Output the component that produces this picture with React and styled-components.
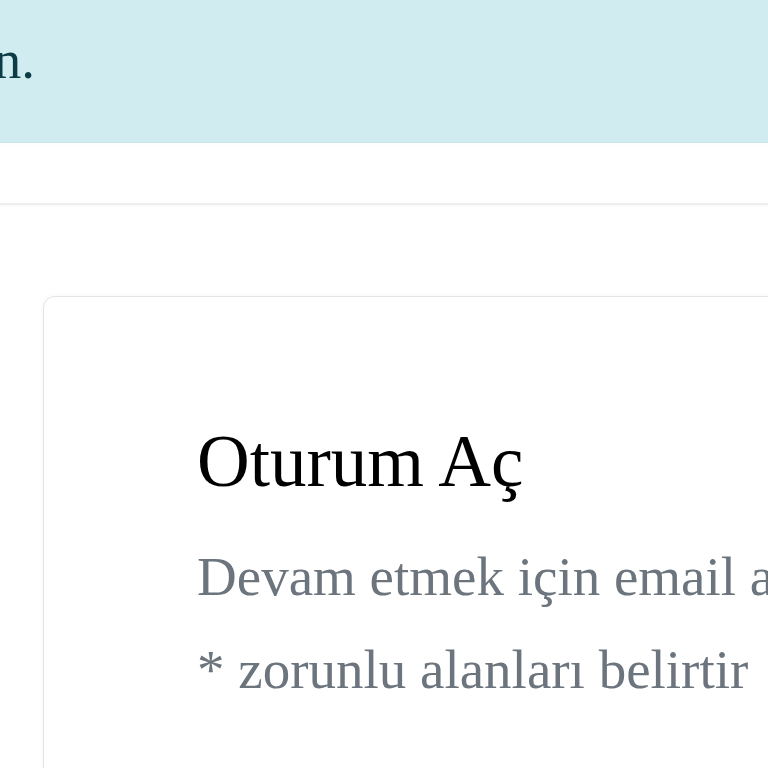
import React from 'react';
import styled, { createGlobalStyle } from 'styled-components';

const GlobalStyle = createGlobalStyle`
  html, body {
    margin: 0;
    padding: 0;
    background: #ffffff;
    overflow: hidden;
  }

  body {
    font-family: "Liberation Serif", "Times New Roman", serif;
  }
`;

const Page = styled.div`
  width: 768px;
  height: 768px;
  overflow: hidden;
  display: flex;
  flex-direction: column;

  & > * {
    flex: none;
  }
`;

const Alert = styled.div`
  display: flex;
  padding: 19px 0 42px;
  background: #d1ecf1;
  border-bottom: 1px solid #c9e6eb;
  color: #0c3d47;
  font-size: 55px;
  line-height: 81px;
`;

const AlertText = styled.div`
  width: 35px;
  display: flex;
  justify-content: flex-end;
  white-space: nowrap;
`;

// white strip under the alert, closed by a faint grey rule
const TopBar = styled.div`
  height: 58px;
  border-top: 2px solid #fdfdfe;
  border-bottom: 2px solid #eeeeee;
  box-shadow: 0 1px 2px rgba(0, 0, 0, 0.03);
`;

const Main = styled.main`
  display: flex;
  padding: 91px 0 0 43px;
`;

const Card = styled.section`
  flex: none;
  width: 1100px;
  min-height: 700px;
  padding: 122px 0 0 153px;
  border: 1px solid #e4e4e4;
  border-radius: 12px;
  box-shadow: 0 0 5px rgba(0, 0, 0, 0.04);
  background: #ffffff;
`;

const Title = styled.h1`
  margin: 0 0 31px;
  font-size: 73px;
  font-weight: 400;
  line-height: 86px;
  color: #000000;
  white-space: nowrap;
`;

const Muted = styled.p`
  margin: 0 0 12px;
  font-size: 55px;
  line-height: 81px;
  color: #6c757d;
  white-space: nowrap;
`;

export default function App() {
  return (
    <>
      <GlobalStyle />
      <Page>
        <Alert>
          <AlertText>Devam etmek için lütfen oturum açın.</AlertText>
        </Alert>
        <TopBar />
        <Main>
          <Card>
            <Title>Oturum Aç</Title>
            <Muted>Devam etmek için email adresinizi ve şifrenizi girin</Muted>
            <Muted>* zorunlu alanları belirtir</Muted>
          </Card>
        </Main>
      </Page>
    </>
  );
}
